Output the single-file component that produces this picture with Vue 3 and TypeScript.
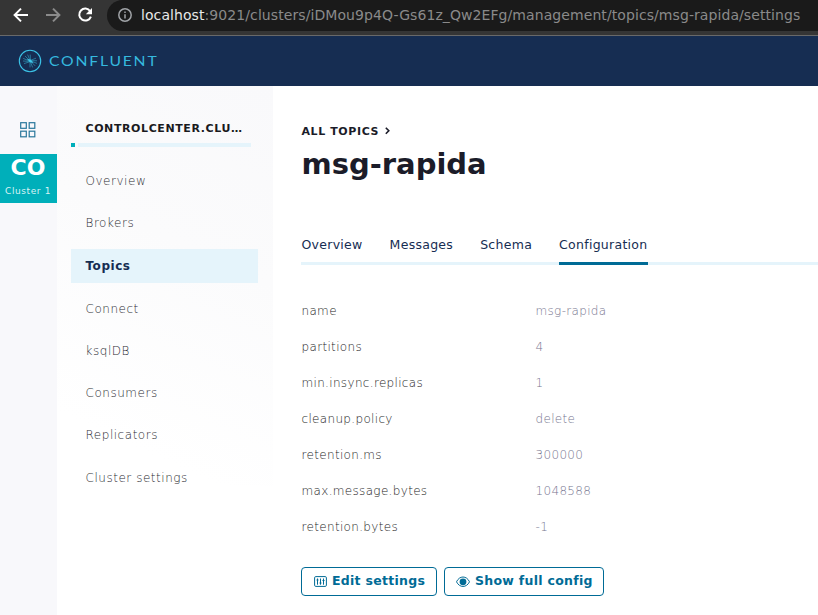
<script setup lang="ts">
interface ConfigEntry {
  key: string
  value: string
}

const navItems: string[] = [
  'Overview', 'Brokers', 'Topics', 'Connect', 'ksqlDB', 'Consumers', 'Replicators', 'Cluster settings',
]
const activeNav = 'Topics'

const tabs: string[] = ['Overview', 'Messages', 'Schema', 'Configuration']
const activeTab = 'Configuration'

const config: ConfigEntry[] = [
  { key: 'name', value: 'msg-rapida' },
  { key: 'partitions', value: '4' },
  { key: 'min.insync.replicas', value: '1' },
  { key: 'cleanup.policy', value: 'delete' },
  { key: 'retention.ms', value: '300000' },
  { key: 'max.message.bytes', value: '1048588' },
  { key: 'retention.bytes', value: '-1' },
]
</script>

<template>
  <div class="window">
    <div class="browser-bar">
      <svg class="nav-icon" viewBox="0 0 16 16"><path d="M15 8H2M8 1.6L1.6 8L8 14.4" /></svg>
      <svg class="nav-icon dim" viewBox="0 0 16 16"><path d="M1 8H14M8 1.6L14.4 8L8 14.4" /></svg>
      <svg class="nav-icon" viewBox="0 0 16 16">
        <path d="M13.2 4.2A6 6 0 1 0 13.9 9.6" />
        <path class="solid" d="M15 1V7.2H8.8Z" />
      </svg>
      <div class="address">
        <svg class="info" viewBox="0 0 14 14">
          <circle cx="7" cy="7" r="6.2" /><path d="M7 6.2V10.4M7 3.4V5" />
        </svg>
        <span class="url"><b>localhost</b>:9021/clusters/iDMou9p4Q-Gs61z_Qw2EFg/management/topics/msg-rapida/settings</span>
      </div>
    </div>

    <header class="brand-bar">
      <svg class="brand" viewBox="0 0 142 24">
        <circle class="ring" cx="12" cy="12" r="10.7" />
        <path class="rays" d="M12.5 12.5L5.2 9.4M12.5 12.5L5 12M12.5 12.5L6 14.6M12.5 12.5L7 7M12.5 12.5L9.6 5.6M12.5 12.5L12.2 5.6M12 11.5L19 14.4M12 11.5L19 11.8M12 11.5L18 9.2M12 11.5L17.2 16.9M12 11.5L14.6 18.4M12 11.5L12 18.4" />
        <path class="core" d="M9 10L12.5 10.5L15.5 14L12 13.3Z" />
        <text x="31" y="17.4" textLength="109.5" lengthAdjust="spacingAndGlyphs">CONFLUENT</text>
      </svg>
    </header>

    <div class="body">
      <aside class="rail">
        <svg class="grid-icon" viewBox="0 0 16 16">
          <rect x=".7" y=".7" width="5.6" height="5.6" /><rect x="9.2" y=".7" width="5.6" height="5.6" />
          <rect x=".7" y="9.2" width="5.6" height="5.6" /><rect x="9.2" y="9.2" width="5.6" height="5.6" />
        </svg>
        <div class="cluster"><strong>CO</strong><span>Cluster 1</span></div>
      </aside>

      <aside class="sidebar">
        <div class="cluster-name">CONTROLCENTER.CLU…</div>
        <div class="progress"><i></i><em></em></div>
        <nav class="menu">
          <a v-for="item in navItems" :key="item" :class="{ active: item === activeNav }">{{ item }}</a>
        </nav>
      </aside>

      <main class="content">
        <div class="crumb">
          ALL TOPICS
          <svg viewBox="0 0 5 8"><path d="M.8 .8L3.8 3.8L.8 6.8" /></svg>
        </div>
        <h1>msg-rapida</h1>
        <div class="tabs">
          <a v-for="tab in tabs" :key="tab" :class="{ active: tab === activeTab }">{{ tab }}</a>
        </div>
        <dl class="config">
          <div v-for="entry in config" :key="entry.key" class="entry">
            <dt>{{ entry.key }}</dt>
            <dd>{{ entry.value }}</dd>
          </div>
        </dl>
        <div class="actions">
          <button class="edit">
            <svg class="sliders" viewBox="0 0 14 12">
              <rect x=".6" y=".6" width="11.8" height="9.8" rx="1.2" />
              <path d="M3.5 2.5V8.7M6.5 2.5V8.7M9.5 2.5V8.7M2.5 4H4.5M5.5 7H7.5M8.5 4.5H10.5" />
            </svg>
            Edit settings
          </button>
          <button class="show">
            <svg class="eye" viewBox="0 0 14 12">
              <path d="M.5 5.8C3.5 -.6 10.5 -.6 13.5 5.8C10.5 12 3.5 12 .5 5.8Z" /><circle cx="7" cy="5.8" r="3.4" />
            </svg>
            Show full config
          </button>
        </div>
      </main>
    </div>
  </div>
</template>

<style>
body {
  margin: 0;
  overflow: hidden;
}
</style>

<style scoped>
.window {
  width: 818px;
  height: 615px;
  overflow: hidden;
  background: #fff;
  font-family: "DejaVu Sans", sans-serif;
  font-size: 12px;
}
.window * { box-sizing: border-box; }
svg { display: block; flex: none; fill: none; }

.browser-bar {
  display: flex;
  height: 36px;
  padding-left: 13px;
  background: #353535;
  border-bottom: 1px solid #696969;
}
.nav-icon { width: 16px; height: 16px; margin: 7px 16px 0 0; stroke: #fff; stroke-width: 2; }
.nav-icon.dim { stroke: #8b8b8b; }
.nav-icon .solid { fill: #fff; stroke: none; }
.address {
  display: flex;
  flex: 1;
  height: 31px;
  margin-left: -2px;
  padding-left: 11px;
  background: #1a1a1a;
  border-radius: 16px 0 0 16px;
}
.info { width: 14px; height: 14px; margin: 8px 9px 0 0; stroke: #a0a3a7; stroke-width: 1.5; }
.url { color: #8a8a8a; font-size: 14px; line-height: 30px; letter-spacing: .08px; white-space: nowrap; }
.url b { color: #e8e8e8; font-weight: 400; }

.brand-bar { height: 50px; padding: 13px 0 0 18px; background: #162d52; }
.brand { width: 142px; height: 24px; }
.ring { stroke: #3cc4e8; stroke-width: 1.1; }
.rays { stroke: #32a8ca; stroke-width: .6; }
.core { fill: #40c7e9; }
.brand text { fill: #35b9df; font: 400 14px "Lato", sans-serif; letter-spacing: 1.6px; }

.body { display: flex; height: 529px; }
.rail { width: 57px; background: #f8f8fb; }
.grid-icon { width: 16px; height: 16px; margin: 36px 0 16px 20px; stroke: #29779c; stroke-width: 1.2; }
.cluster {
  display: flex;
  flex-direction: column;
  align-items: center;
  height: 49px;
  padding-right: 1px;
  color: #fff;
  background: #00afba;
}
.cluster strong { font-size: 22px; line-height: 27px; }
.cluster span { font-size: 9px; line-height: 20px; letter-spacing: .6px; color: #d9f3f5; white-space: nowrap; }

.sidebar {
  width: 216px;
  padding-left: 14px;
  background: linear-gradient(205deg, #f9f9fb 0, #fbfbfc 40%, #fff 85%) no-repeat 0 0 / 100% 400px;
}
.cluster-name {
  padding: 36px 0 0 14.5px;
  color: #1a1a1e;
  font-size: 11px;
  font-weight: 700;
  line-height: 13px;
  letter-spacing: .6px;
  white-space: nowrap;
}
.progress { display: flex; gap: 3px; margin-top: 8px; }
.progress i { width: 4px; height: 4px; background: #00afba; }
.progress em { width: 173px; height: 4px; background: #e5f4fb; }
.menu { display: flex; flex-direction: column; gap: 8.25px; margin-top: 17px; }
.menu a {
  width: 187px;
  height: 34px;
  padding-left: 14.5px;
  color: #2c2c33;
  font-weight: 300;
  line-height: 34px;
  letter-spacing: .53px;
}
.menu a.active { margin: .4px 0; color: #162d52; font-weight: 700; background: #e5f4fb; }

.content { flex: 1; min-width: 0; padding: 39px 0 0 28px; color: #1b1c29; }
.crumb { display: flex; padding-left: .5px; font-size: 11px; font-weight: 700; line-height: 14px; letter-spacing: .6px; }
.crumb svg { width: 5px; height: 8px; margin: 2px 0 0 5.5px; stroke: #1b1c29; stroke-width: 1.6; }
h1 { margin: 6px 0 0; padding-left: .5px; font-size: 29px; line-height: 38px; }
.tabs { display: flex; gap: 27px; height: 35px; margin-top: 47px; border-bottom: 3px solid #e5f4fb; }
.tabs a { height: 35px; color: #162d52; font-size: 12.5px; line-height: 30px; letter-spacing: .28px; }
.tabs a:first-child { padding-left: .5px; }
.tabs a.active { border-bottom: 3px solid #006b96; }
.config { margin: 28px 0 0; padding-left: .5px; }
.entry { display: flex; height: 36px; font-weight: 300; line-height: 36px; letter-spacing: .33px; }
dt { width: 234px; color: #1c1c24; }
dd { margin: 0; color: #77768f; }
.actions { display: flex; gap: 7px; margin-top: 22px; }
button {
  display: flex;
  align-items: center;
  height: 29px;
  padding: 0 0 2px 11px;
  color: #006b96;
  font: 700 12.5px "DejaVu Sans", sans-serif;
  letter-spacing: .28px;
  white-space: nowrap;
  background: #fff;
  border: 1px solid #006b96;
  border-radius: 4px;
}
.edit { width: 136px; }
.show { width: 160px; }
button svg { width: 14px; height: 12px; margin: 3px 5px 0 0; stroke: #006b96; }
.edit svg { margin-left: 1px; margin-right: 4px; }
.eye circle { fill: #006b96; stroke: none; }
</style>
